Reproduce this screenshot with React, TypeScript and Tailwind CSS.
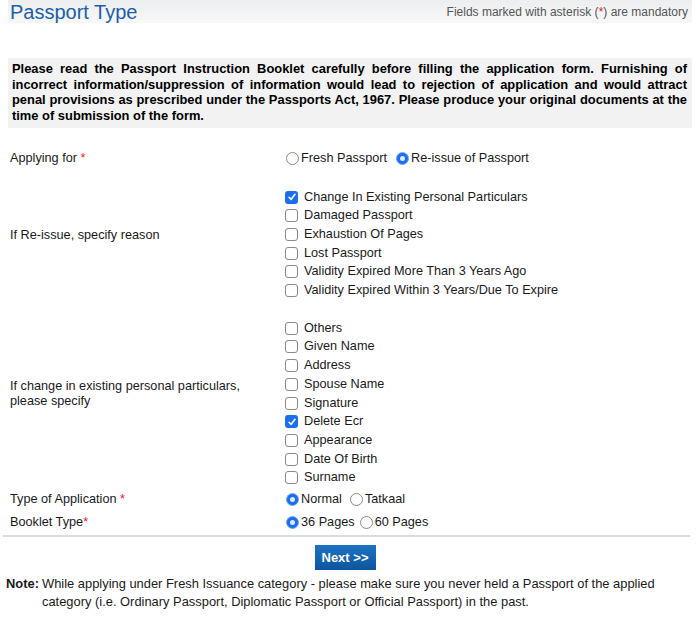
import React from "react";

const REASONS: { label: string; checked?: boolean }[] = [
  { label: "Change In Existing Personal Particulars", checked: true },
  { label: "Damaged Passport" },
  { label: "Exhaustion Of Pages" },
  { label: "Lost Passport" },
  { label: "Validity Expired More Than 3 Years Ago" },
  { label: "Validity Expired Within 3 Years/Due To Expire" },
];

const PARTICULARS: { label: string; checked?: boolean }[] = [
  { label: "Others" },
  { label: "Given Name" },
  { label: "Address" },
  { label: "Spouse Name" },
  { label: "Signature" },
  { label: "Delete Ecr", checked: true },
  { label: "Appearance" },
  { label: "Date Of Birth" },
  { label: "Surname" },
];

function Radio({ checked }: { checked?: boolean }) {
  return checked ? (
    <span className="inline-flex h-[13px] w-[13px] shrink-0 items-center justify-center rounded-full border border-[#7aa7ec] bg-[#1a6ff0]">
      <span className="h-[5px] w-[5px] rounded-full bg-[#dce9ff]" />
    </span>
  ) : (
    <span className="inline-block h-[13px] w-[13px] shrink-0 rounded-full border border-[#8a8a8a] bg-white" />
  );
}

function Check({ checked }: { checked?: boolean }) {
  return checked ? (
    <span className="inline-flex h-[13px] w-[13px] shrink-0 items-center justify-center rounded-[3px] bg-[#1a6ff0]">
      <svg viewBox="0 0 12 12" className="h-[10px] w-[10px]">
        <path d="M2.5 6.3 L5 8.8 L9.6 2.8" fill="none" stroke="white" strokeWidth="1.9" strokeLinecap="round" strokeLinejoin="round" />
      </svg>
    </span>
  ) : (
    <span className="inline-block h-[13px] w-[13px] shrink-0 rounded-[3px] border border-[#8a8a8a] bg-white" />
  );
}

function Star() {
  return <span className="text-[#e0202a]">*</span>;
}

function CheckGroup({ items, top }: { items: { label: string; checked?: boolean }[]; top: string }) {
  return (
    <div className={"flex flex-col " + top}>
      {items.map((r) => (
        <label key={r.label} className="flex h-[18.7px] items-center">
          <Check checked={r.checked} />
          <span className="ml-[6px]">{r.label}</span>
        </label>
      ))}
    </div>
  );
}

export default function App() {
  return (
    <div className="w-[700px] bg-white text-[12.7px] text-[#1a1a1a] [font-family:'Liberation_Sans',Arial,sans-serif]">
      {/* Header */}
      <div className="mx-2 flex h-[23px] items-center justify-between bg-gradient-to-b from-[#eceef0] to-[#f7f8f9] pr-1 pl-[2px]">
        <span className="text-[20px] leading-none text-[#1c5fa8]">Passport Type</span>
        <span className="text-[12px] text-[#555]">
          Fields marked with asterisk (<Star />) are mandatory
        </span>
      </div>

      {/* Instruction box */}
      <div className="mx-2 mt-[35px] bg-[#f2f2f2] pt-[3px] pb-[4px] pr-[5px] pl-[4px] text-justify text-[12.9px] leading-[15.7px] font-bold text-black">
        Please read the Passport Instruction Booklet carefully before filling the application form. Furnishing of
        incorrect information/suppression of information would lead to rejection of application and would attract
        penal provisions as prescribed under the Passports Act, 1967. Please produce your original documents at the
        time of submission of the form.
      </div>

      {/* Form rows */}
      <div className="mt-[21px] pl-[10px]">
        <div className="flex h-[20px] items-center">
          <div className="w-[276px]">
            Applying for <Star />
          </div>
          <div className="flex items-center">
            <Radio />
            <span className="ml-[2px]">Fresh Passport</span>
            <span className="ml-[9px]" />
            <Radio checked />
            <span className="ml-[2px]">Re-issue of Passport</span>
          </div>
        </div>

        <div className="mt-[2px] flex items-center">
          <div className="w-[275px]">If Re-issue, specify reason</div>
          <CheckGroup items={REASONS} top="pt-[17px]" />
        </div>

        <div className="flex items-center">
          <div className="w-[275px] leading-[15px]">
            If change in existing personal particulars,
            <br />
            please specify
          </div>
          <CheckGroup items={PARTICULARS} top="pt-[19px]" />
        </div>

        <div className="mt-[1px] flex h-[23px] items-center">
          <div className="w-[276px]">
            Type of Application <Star />
          </div>
          <div className="flex items-center">
            <Radio checked />
            <span className="ml-[2px]">Normal</span>
            <span className="ml-[8px]" />
            <Radio />
            <span className="ml-[2px]">Tatkaal</span>
          </div>
        </div>

        <div className="flex h-[23px] items-center">
          <div className="w-[276px]">
            Booklet Type<Star />
          </div>
          <div className="flex items-center">
            <Radio checked />
            <span className="ml-[2px]">36 Pages</span>
            <span className="ml-[5px]" />
            <Radio />
            <span className="ml-[2px]">60 Pages</span>
          </div>
        </div>
      </div>

      <div className="mt-[1px] mr-[10px] ml-[3px] h-[2px] bg-[#dcdcdc]" />

      <div className="flex w-[690px] justify-center pt-[8px]">
        <button className="h-[25px] w-[61px] bg-gradient-to-b from-[#1d74c4] to-[#0d559f] text-[13px] font-bold text-white">
          Next &gt;&gt;
        </button>
      </div>

      <div className="mt-[5px] flex pl-[6px] text-[12.9px] leading-[18px]">
        <span className="w-[36px] shrink-0 font-bold">Note:</span>
        <span>
          While applying under Fresh Issuance category - please make sure you never held a Passport of the applied
          category (i.e. Ordinary Passport, Diplomatic Passport or Official Passport) in the past.
        </span>
      </div>
    </div>
  );
}
